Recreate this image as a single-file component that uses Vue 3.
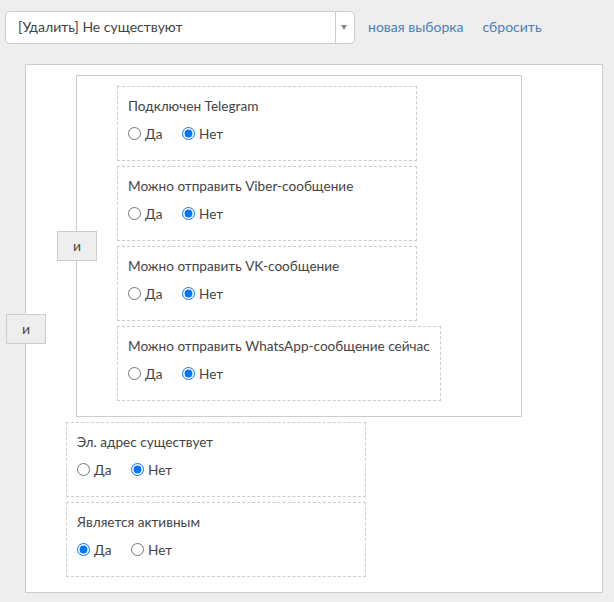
<script setup>
const innerRules = [
  { id: "tg", label: "Подключен Telegram", value: "no" },
  { id: "viber", label: "Можно отправить Viber-сообщение", value: "no" },
  { id: "vk", label: "Можно отправить VK-сообщение", value: "no" },
  { id: "wa", label: "Можно отправить WhatsApp-сообщение сейчас", value: "no" },
];

const outerRules = [
  { id: "email", label: "Эл. адрес существует", value: "no" },
  { id: "active", label: "Является активным", value: "yes" },
];
</script>

<template>
  <div class="page">
    <div class="toolbar">
      <div class="select">
        <span class="select-text">[Удалить] Не существуют</span>
        <span class="select-arrow"></span>
      </div>
      <a class="link" href="#">новая выборка</a>
      <a class="link" href="#">сбросить</a>
    </div>

    <div class="group outer">
      <button class="op op-outer">и</button>

      <div class="group inner">
        <button class="op op-inner">и</button>
        <div v-for="r in innerRules" :key="r.id" class="rule">
          <div class="rule-label">{{ r.label }}</div>
          <div class="rule-options">
            <label class="opt"><input type="radio" :name="r.id" :checked="r.value === 'yes'" />Да</label>
            <label class="opt"><input type="radio" :name="r.id" :checked="r.value === 'no'" />Нет</label>
          </div>
        </div>
      </div>

      <div v-for="r in outerRules" :key="r.id" class="rule">
        <div class="rule-label">{{ r.label }}</div>
        <div class="rule-options">
          <label class="opt"><input type="radio" :name="r.id" :checked="r.value === 'yes'" />Да</label>
          <label class="opt"><input type="radio" :name="r.id" :checked="r.value === 'no'" />Нет</label>
        </div>
      </div>
    </div>
  </div>
</template>

<style scoped>
.page {
  width: 614px;
  height: 602px;
  overflow: hidden;
  box-sizing: border-box;
  padding: 11px 0 0 5px;
  background: #eeeeee;
  font-family: Lato, "Open Sans", "Liberation Sans", sans-serif;
  font-size: 14px;
  color: #444;
}
.toolbar { display: flex; align-items: center; height: 33px; }
.select {
  display: flex;
  align-items: center;
  width: 350px;
  height: 33px;
  box-sizing: border-box;
  border: 1px solid #ccc;
  border-radius: 5px;
  background: #fff;
  margin-right: 13px;
}
.select-text { flex: 1; padding-left: 12px; padding-bottom: 2px; }
.select-arrow {
  position: relative;
  width: 18px;
  height: 100%;
  border-left: 1px solid #ccc;
}
.select-arrow::after {
  content: "";
  position: absolute;
  left: 5px;
  top: 13px;
  border-left: 3.5px solid transparent;
  border-right: 3.5px solid transparent;
  border-top: 5px solid #888;
}
.link { color: #4a7fb8; text-decoration: none; margin-right: 19px; padding-bottom: 2px; }
.group {
  position: relative;
  display: inline-flex;
  flex-direction: column;
  align-items: flex-start;
  box-sizing: border-box;
  border: 1px solid #ccc;
  background: #fff;
  padding: 10px 80px 15px 40px;
}
.outer { margin: 20px 0 0 20px; }
.inner { margin: 0 0 5px 10px; }
.rule {
  box-sizing: border-box;
  min-width: 300px;
  height: 75px;
  padding: 10px 10px 0;
  border: 1px dashed #ccc;
  background: #fff;
  font-size: 13.6px;
}
.rule + .rule { margin-top: 5px; }
.rule-label { line-height: 18px; white-space: nowrap; }
.rule-options { display: flex; margin-top: 10px; line-height: 18px; }
.opt { display: flex; align-items: center; width: 54px; }
.opt input { margin: 0 4px 2px 0; }
.op {
  position: absolute;
  width: 40px;
  height: 30px;
  box-sizing: border-box;
  padding: 0 0 1px;
  border: 1px solid #ccc;
  background: #eee;
  color: #444;
  font: inherit;
  z-index: 1;
}
.op-outer { left: -20px; top: 249px; }
.op-inner { left: -20px; top: 155px; }
</style>

<style>
html, body { margin: 0; background: #eee; }
</style>
